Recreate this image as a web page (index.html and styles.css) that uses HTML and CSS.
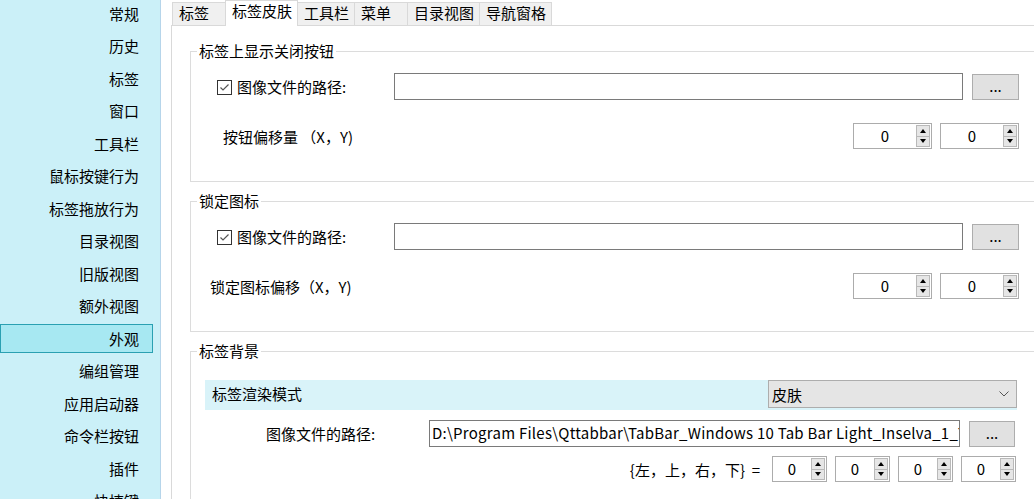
FILE: index.html
```html
<!DOCTYPE html>
<html lang="zh-CN">
<head>
    <meta charset="UTF-8">
    <title>选项 - 外观</title>
    <link rel="stylesheet" href="styles.css">
</head>
<body>
    <div class="window">
        <nav class="sidebar">
            <div class="nav-item">常规</div>
            <div class="nav-item">历史</div>
            <div class="nav-item">标签</div>
            <div class="nav-item">窗口</div>
            <div class="nav-item">工具栏</div>
            <div class="nav-item">鼠标按键行为</div>
            <div class="nav-item">标签拖放行为</div>
            <div class="nav-item">目录视图</div>
            <div class="nav-item">旧版视图</div>
            <div class="nav-item">额外视图</div>
            <div class="nav-item active">外观</div>
            <div class="nav-item">编组管理</div>
            <div class="nav-item">应用启动器</div>
            <div class="nav-item">命令栏按钮</div>
            <div class="nav-item">插件</div>
            <div class="nav-item">快捷键</div>
        </nav>
        <main class="main">
            <div class="tabs">
                <div class="tab">标签</div>
                <div class="tab active">标签皮肤</div>
                <div class="tab">工具栏</div>
                <div class="tab">菜单</div>
                <div class="tab">目录视图</div>
                <div class="tab">导航窗格</div>
            </div>
            <div class="panel">
                <fieldset class="group">
                    <legend>标签上显示关闭按钮</legend>
                    <div class="row path-row">
                        <label class="check">
                            <span class="box"><svg width="13" height="13" viewBox="0 0 13 13"><polyline points="2.5,6.5 5,9 10.5,3.5" fill="none" stroke="#555" stroke-width="1.2"/></svg></span>
                            图像文件的路径:
                        </label>
                        <div class="textbox"></div>
                        <div class="browse">...</div>
                    </div>
                    <div class="row offset-row">
                        <span class="offset-label">按钮偏移量 （X，Y)</span>
                        <div class="spins">
                            <div class="spin"><span class="val">0</span><span class="arrows"><i class="up"></i><i class="down"></i></span></div>
                            <div class="spin"><span class="val">0</span><span class="arrows"><i class="up"></i><i class="down"></i></span></div>
                        </div>
                    </div>
                </fieldset>

                <fieldset class="group">
                    <legend>锁定图标</legend>
                    <div class="row path-row">
                        <label class="check">
                            <span class="box"><svg width="13" height="13" viewBox="0 0 13 13"><polyline points="2.5,6.5 5,9 10.5,3.5" fill="none" stroke="#555" stroke-width="1.2"/></svg></span>
                            图像文件的路径:
                        </label>
                        <div class="textbox"></div>
                        <div class="browse">...</div>
                    </div>
                    <div class="row offset-row lock">
                        <span class="offset-label">锁定图标偏移（X，Y)</span>
                        <div class="spins">
                            <div class="spin"><span class="val">0</span><span class="arrows"><i class="up"></i><i class="down"></i></span></div>
                            <div class="spin"><span class="val">0</span><span class="arrows"><i class="up"></i><i class="down"></i></span></div>
                        </div>
                    </div>
                </fieldset>

                <fieldset class="group">
                    <legend>标签背景</legend>
                    <div class="row mode-row">
                        <span>标签渲染模式</span>
                        <div class="combo">
                            <span>皮肤</span>
                            <svg width="10" height="6" viewBox="0 0 10 6"><polyline points="0.5,0.5 5,5 9.5,0.5" fill="none" stroke="#555" stroke-width="1"/></svg>
                        </div>
                    </div>
                    <div class="row bg-path-row">
                        <span class="bg-label">图像文件的路径:</span>
                        <div class="textbox wide"><span class="path-text">D:\Program Files\Qttabbar\TabBar_Windows 10 Tab Bar Light_Inselva_1_Tabs.png</span></div>
                        <div class="browse">...</div>
                    </div>
                    <div class="row margin-row">
                        <span class="margin-label">{左，上，右，下}&nbsp;&nbsp;=</span>
                        <div class="spin small"><span class="val">0</span><span class="arrows"><i class="up"></i><i class="down"></i></span></div>
                        <div class="spin small"><span class="val">0</span><span class="arrows"><i class="up"></i><i class="down"></i></span></div>
                        <div class="spin small"><span class="val">0</span><span class="arrows"><i class="up"></i><i class="down"></i></span></div>
                        <div class="spin small"><span class="val">0</span><span class="arrows"><i class="up"></i><i class="down"></i></span></div>
                    </div>
                </fieldset>
            </div>
        </main>
    </div>
</body>
</html>
```

FILE: styles.css
```css
* {
    box-sizing: border-box;
}
html, body {
    margin: 0;
    height: 100%;
    overflow: hidden;
}
body {
    font-family: "Noto Sans CJK SC", "Noto Sans", sans-serif;
    font-size: 15px;
    color: #000;
    background: #fff;
}
.window {
    display: flex;
    width: 1034px;
    height: 499px;
    overflow: hidden;
}

/* left navigation */
.sidebar {
    width: 161px;
    flex: none;
    background: #cbf0f8;
    border-right: 1px solid #b6d5ea;
    display: flex;
    flex-direction: column;
    gap: 3.5px;
    margin-top: -1.5px;
}
.nav-item {
    height: 29px;
    flex: none;
    margin-right: 7px;
    padding-right: 13px;
    display: flex;
    align-items: center;
    justify-content: flex-end;
    border: 1px solid transparent;
    line-height: 27px;
}
.nav-item.active {
    background: #a7e8f2;
    border-color: #2aa0b2;
}

/* tab control */
.main {
    flex: 1;
    min-width: 0;
    padding-left: 10px;
    display: flex;
    flex-direction: column;
}
.tabs {
    height: 25px;
    flex: none;
    display: flex;
    align-items: flex-end;
    padding-left: 1px;
}
.tab {
    height: 23px;
    min-width: 54px;
    padding: 0 5px 0 6px;
    background: #f0f0f0;
    border: 1px solid #d9d9d9;
    border-bottom: none;
    line-height: 19px;
    white-space: nowrap;
}
.tab + .tab {
    margin-left: -1px;
}
.tab.active {
    height: 26px;
    margin-bottom: -1px;
    background: #fff;
    position: relative;
    z-index: 1;
    line-height: 20px;
}
.panel {
    width: 900px;
    flex: 1;
    background: #fff;
    border-top: 1px solid #d9d9d9;
    border-left: 1px solid #d9d9d9;
    padding-top: 15px;
}

/* group boxes */
.group {
    margin: 0 0 0 18px;
    padding: 12px 0 32px 0;
    border: 1px solid #dcdcdc;
    min-width: 0;
}
.group + .group {
    margin-top: 9px;
}
.group legend {
    margin-left: 6px;
    padding: 0 2px;
    line-height: 20px;
}
.row {
    display: flex;
    align-items: center;
    width: 828px;
}
.path-row {
    height: 27px;
    padding-left: 26px;
}
.check {
    width: 177px;
    display: flex;
    align-items: center;
    white-space: nowrap;
}
.box {
    width: 15px;
    height: 15px;
    margin: 2px 5px 0 0;
    border: 1px solid #333;
    background: #fff;
    display: flex;
}
.textbox {
    width: 569px;
    height: 27px;
    border: 1px solid #7a7a7a;
    background: #fff;
    overflow: hidden;
    white-space: nowrap;
}
.textbox.wide {
    width: 531px;
    padding-left: 2px;
    line-height: 24px;
}
.path-text {
    letter-spacing: 0.25px;
}
.browse {
    width: 47px;
    height: 26px;
    margin-left: 9px;
    background: #e1e1e1;
    border: 1px solid #adadad;
    text-align: center;
    line-height: 22px;
}
.offset-row {
    height: 26px;
    margin-top: 23px;
    padding-left: 32px;
}
.offset-row.lock {
    padding-left: 19px;
}
.spins {
    margin-left: auto;
    display: flex;
    gap: 8px;
}

/* numeric up/down */
.spin {
    width: 79px;
    height: 26px;
    border: 1px solid #acacac;
    background: #fff;
    display: flex;
}
.spin.small {
    width: 55px;
    margin-left: 8px;
}
.spin .val {
    flex: 1;
    text-align: center;
    line-height: 23px;
}
.arrows {
    width: 14px;
    margin: 1px 1px 1px 0;
    display: flex;
    flex-direction: column;
}
.arrows i {
    flex: 1;
    background: #e6e6e6;
    border: 1px solid #b9b9b9;
    display: flex;
    align-items: center;
    justify-content: center;
}
.arrows i + i {
    border-top: none;
}
.arrows i::after {
    content: "";
    border-left: 3.5px solid transparent;
    border-right: 3.5px solid transparent;
}
.arrows .up::after {
    border-bottom: 4px solid #000;
}
.arrows .down::after {
    border-top: 4px solid #000;
}

/* background section */
.mode-row {
    width: 812px;
    height: 30px;
    margin: 7px 0 0 14px;
    padding-left: 7px;
    background: #d9f3f9;
    align-items: flex-start;
}
.mode-row > span {
    line-height: 28px;
}
.combo {
    margin-left: auto;
    width: 249px;
    height: 28px;
    padding: 0 7px 0 3px;
    background: #e5e5e5;
    border: 1px solid #adadad;
    display: flex;
    align-items: center;
    justify-content: space-between;
}
.bg-path-row {
    height: 27px;
    margin-top: 10px;
    padding-left: 75px;
}
.bg-label {
    width: 163px;
}
.bg-path-row .browse {
    width: 46px;
}
.margin-row {
    width: 825px;
    height: 26px;
    margin-top: 9px;
    justify-content: flex-end;
}
.margin-label {
    margin-right: 4px;
}
```
